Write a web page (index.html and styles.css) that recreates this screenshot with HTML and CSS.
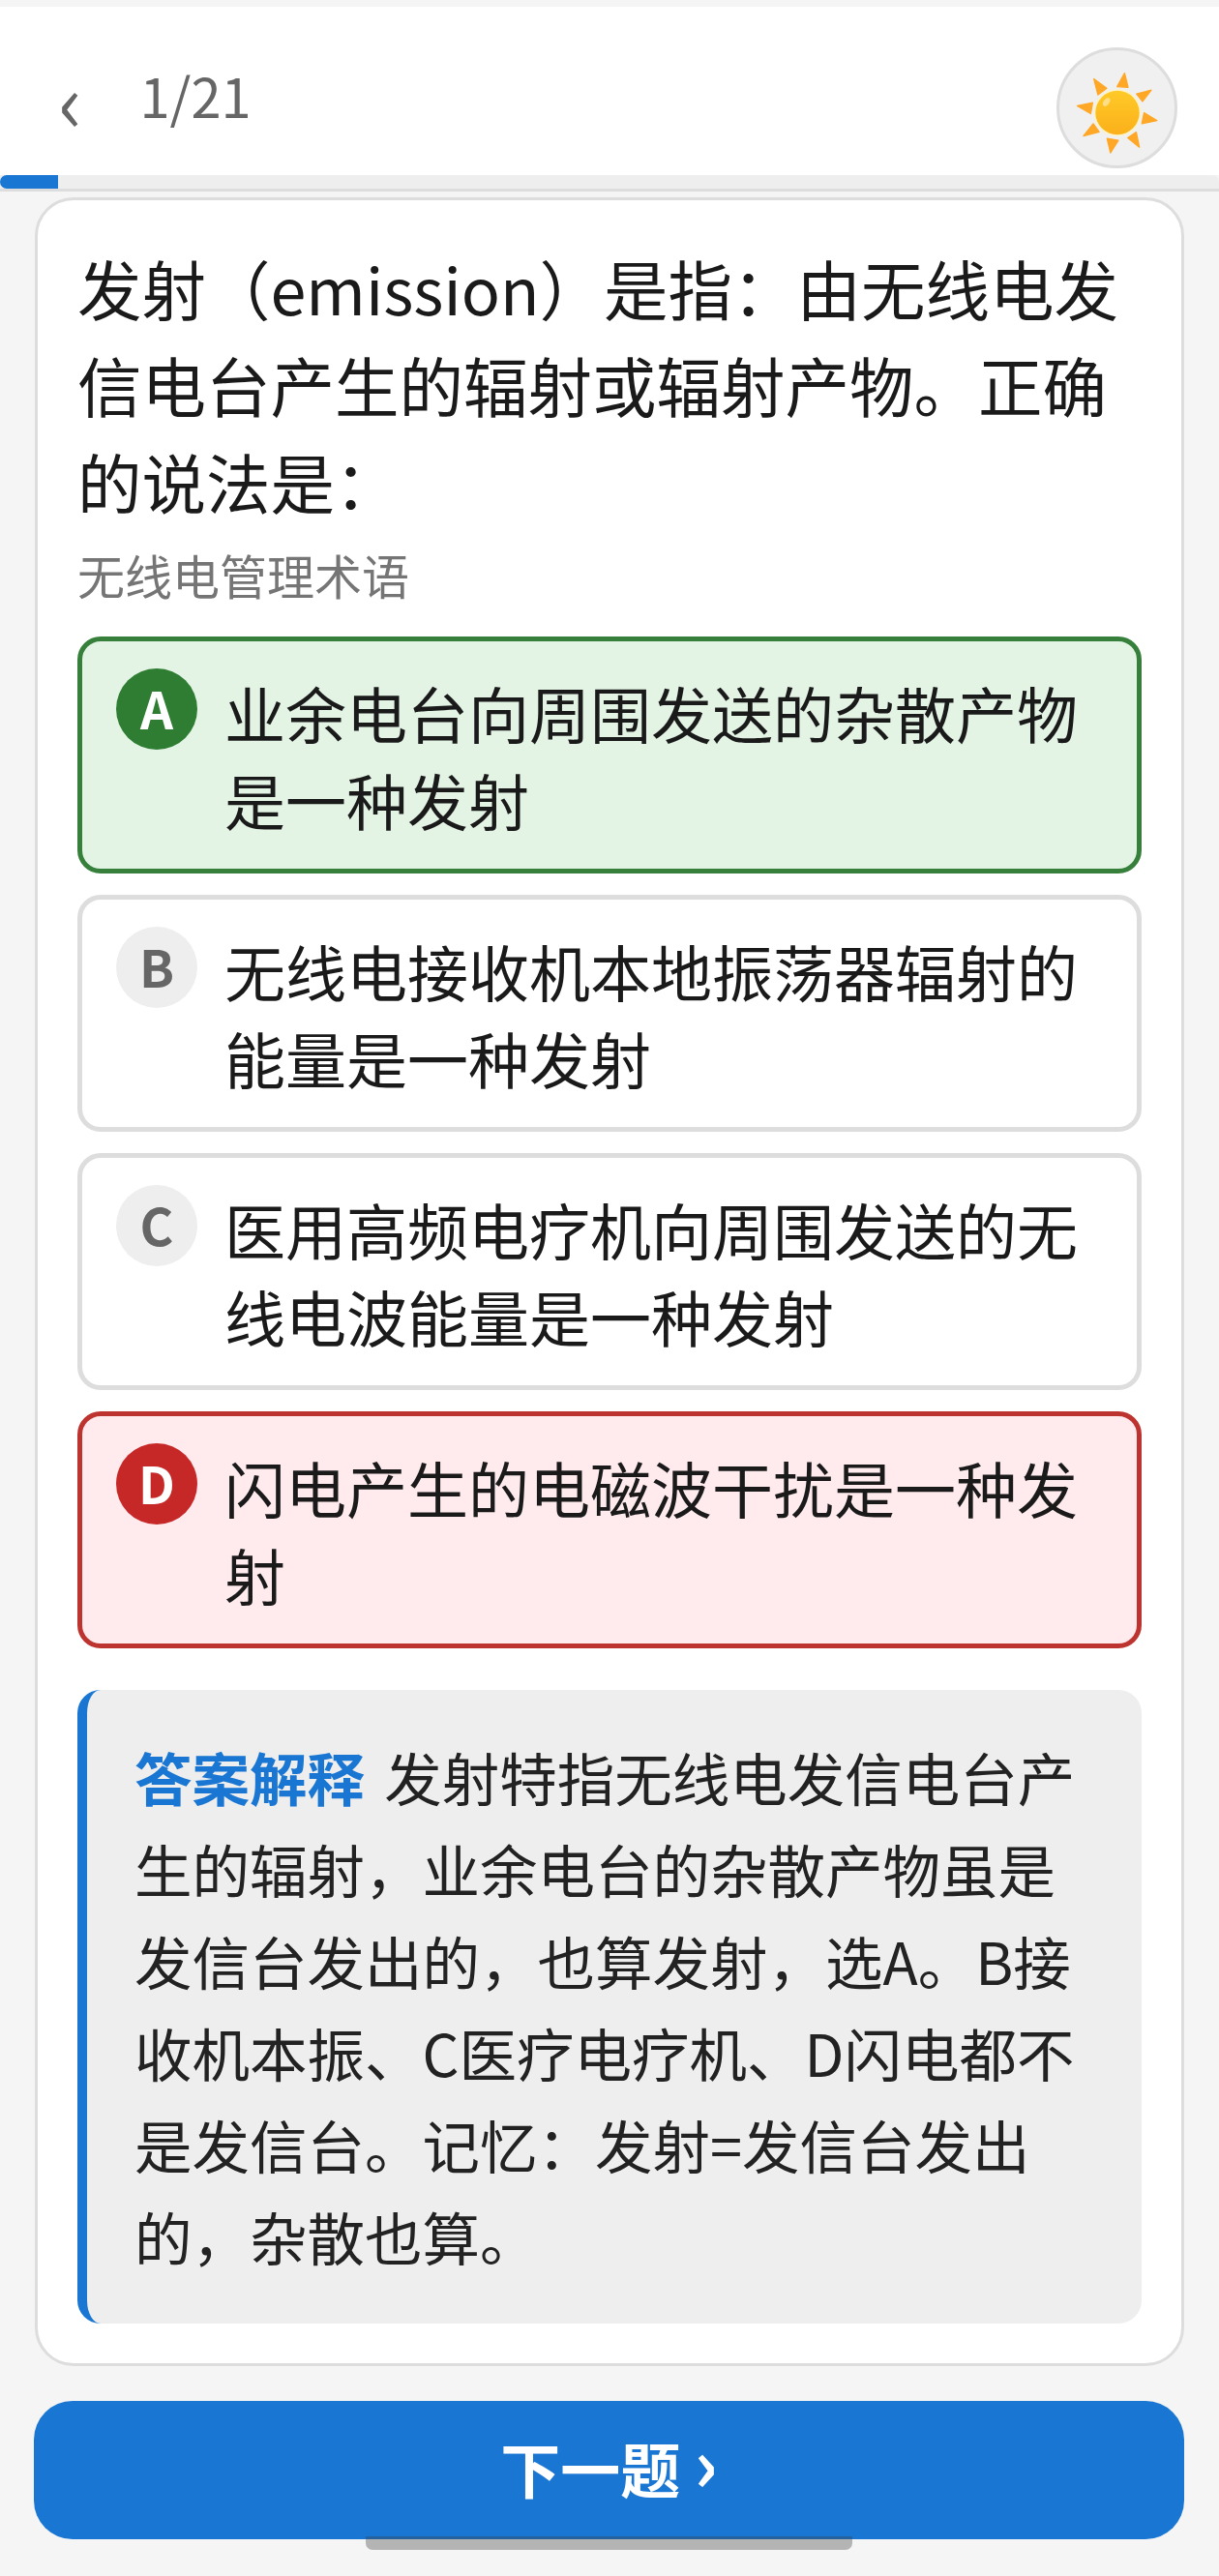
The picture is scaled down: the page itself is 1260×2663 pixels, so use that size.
FILE: index.html
```html
<!DOCTYPE html>
<html lang="zh-CN">
<head>
    <meta charset="UTF-8">
    <title>无线电管理术语</title>
    <meta name="viewport" content="width=device-width, initial-scale=1.0">
    <link rel="stylesheet" href="styles.css">
</head>
<body>

    <header class="topbar">
        <div class="topbar-left">
            <span class="back">‹</span>
            <span class="counter">1/21</span>
        </div>
        <div class="theme-toggle">
            <svg class="sun" viewBox="100 61 367 367">
                <defs>
                    <linearGradient id="sunFill" x1="0" y1="0" x2="0" y2="1">
                        <stop offset="0" stop-color="#ffca28"/>
                        <stop offset="1" stop-color="#fbb01a"/>
                    </linearGradient>
                </defs>
                <g fill="#ffa726" stroke="#ffa726" stroke-width="4" stroke-linejoin="round">
                    <polygon points="308,134 284,177 319,179"/>
                    <polygon points="393,188 346,200 365,224"/>
                    <polygon points="411,285 370,260 363,295"/>
                    <polygon points="355,370 318,340 345,322"/>
                    <polygon points="263,388 252,342 288,348"/>
                    <polygon points="177,334 208,295 227,321"/>
                    <polygon points="157,238 206,228 200,263"/>
                    <polygon points="210,152 251,182 223,203"/>
                </g>
                <circle cx="285" cy="260" r="75" fill="#fff3c4"/>
                <circle cx="285" cy="260" r="70" fill="url(#sunFill)"/>
                <ellipse cx="250" cy="226" rx="9" ry="15" transform="rotate(35 250 226)" fill="#fff" opacity="0.45"/>
            </svg>
        </div>
    </header>

    <div class="progress"><div class="progress-fill"></div></div>

    <main class="card">
        <h1 class="question">发射（emission）是指：由无线电发信电台产生的辐射或辐射产物。正确的说法是：</h1>
        <div class="category">无线电管理术语</div>

        <div class="options">
            <div class="option correct">
                <span class="letter">A</span>
                <span class="option-text">业余电台向周围发送的杂散产物是一种发射</span>
            </div>
            <div class="option">
                <span class="letter">B</span>
                <span class="option-text">无线电接收机本地振荡器辐射的能量是一种发射</span>
            </div>
            <div class="option">
                <span class="letter">C</span>
                <span class="option-text">医用高频电疗机向周围发送的无线电波能量是一种发射</span>
            </div>
            <div class="option wrong">
                <span class="letter">D</span>
                <span class="option-text">闪电产生的电磁波干扰是一种发射</span>
            </div>
        </div>

        <div class="explain">
            <strong>答案解释</strong> 发射特指无线电发信电台产生的辐射，业余电台的杂散产物虽是发信台发出的，也算发射，选A。B接收机本振、C医疗电疗机、D闪电都不是发信台。记忆：发射=发信台发出的，杂散也算。
        </div>
    </main>

    <button class="next-btn">下一题 <span class="next-arrow">›</span></button>

    <div class="home-bar"></div>

</body>
</html>
```

FILE: styles.css
```css
* {
    box-sizing: border-box;
}
body {
    font-family: "Noto Sans CJK SC", "Noto Sans", sans-serif;
    margin: 0;
    padding: 7px 0 0;
    height: 2663px;
    position: relative;
    overflow: hidden;
    background-color: #f5f5f5;
    color: #1a1a1a;
}

/* Top bar */
.topbar {
    display: flex;
    justify-content: space-between;
    align-items: flex-end;
    height: 174px;
    padding: 0 43px 7px 60px;
    background-color: #fff;
}
.topbar-left {
    display: flex;
    align-items: center;
    gap: 59px;
    margin-bottom: 31px;
}
.back {
    font-size: 84px;
    line-height: 1;
    color: #666;
    margin-top: 8px;
}
.counter {
    font-size: 56px;
    color: #666;
}
.theme-toggle {
    display: flex;
    width: 125px;
    height: 125px;
    border: 3px solid #ddd;
    border-radius: 50%;
    background-color: #f0f0f0;
}
.sun {
    width: 100%;
    height: 100%;
}

.progress {
    height: 17px;
    background-color: #eee;
    border-bottom: 3px solid #ddd;
    border-radius: 0 7px 0 0;
}
.progress-fill {
    width: 60px;
    height: 14px;
    background-color: #1976d2;
    border-radius: 7px 0 0 7px;
}

/* Question card */
.card {
    margin: 6px 36px 0;
    height: 2242px;
    padding: 40px 41px 0;
    background-color: #fff;
    border: 3px solid #ddd;
    border-radius: 40px;
}
.question {
    margin: 0;
    font-size: 66.5px;
    font-weight: 400;
    line-height: 100px;
    color: #1a1a1a;
}
.category {
    font-size: 49px;
    line-height: 72px;
    margin-top: 11px;
    color: #757575;
}

.options {
    display: flex;
    flex-direction: column;
    gap: 22px;
    margin-top: 28px;
}
.option {
    display: flex;
    gap: 28px;
    height: 245px;
    padding: 28px 40px 0 35px;
    border: 5px solid #ddd;
    border-radius: 24px;
    background-color: #fff;
}
.option.correct {
    border-color: #37803b;
    background-color: #e3f4e5;
}
.option.wrong {
    border-color: #bd332f;
    background-color: #ffebee;
}
.letter {
    flex: none;
    width: 84px;
    height: 84px;
    border-radius: 50%;
    background-color: #eee;
    color: #666;
    font-size: 53px;
    font-weight: 700;
    line-height: 80px;
    text-align: center;
}
.correct .letter {
    background-color: #2e7d32;
    color: #fff;
}
.wrong .letter {
    background-color: #c62828;
    color: #fff;
}
.option-text {
    font-size: 63px;
    line-height: 90px;
    color: #1a1a1a;
}

/* Answer explanation */
.explain {
    margin-top: 43px;
    height: 655px;
    padding: 42px 50px 0 49px;
    font-size: 59.5px;
    line-height: 95px;
    color: #222;
    background-color: #eee;
    border-left: 10px solid #1976d2;
    border-radius: 24px;
}
.explain strong {
    color: #1976d2;
    font-weight: 700;
    margin-right: 7px;
}

.next-btn {
    display: block;
    width: 1189px;
    height: 143px;
    margin: 36px 35px 0;
    padding: 0 0 6px;
    border: none;
    border-radius: 40px;
    background-color: #1976d2;
    color: #fff;
    font-family: inherit;
    font-size: 62px;
    font-weight: 700;
    cursor: pointer;
}
.next-arrow {
    font-size: 76px;
    line-height: 1;
    position: relative;
    top: -2px;
}

.home-bar {
    position: absolute;
    left: 378px;
    top: 2622px;
    width: 503px;
    height: 14px;
    background-color: rgba(60, 60, 60, 0.35);
    border-radius: 0 0 7px 7px;
}
```
